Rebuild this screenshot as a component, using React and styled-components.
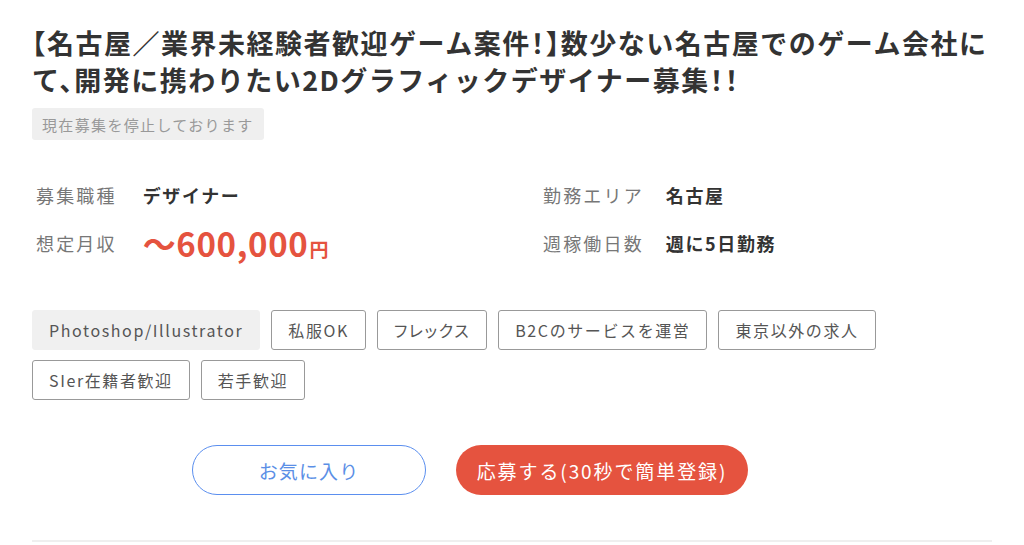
import React from "react";
import styled, { createGlobalStyle } from "styled-components";

const Global = createGlobalStyle`
  html, body { margin: 0; padding: 0; background: #fff; }
  body {
    font-family: "Noto Sans CJK JP", "Noto Sans", sans-serif;
    color: #333;
    -webkit-font-smoothing: antialiased;
  }
  * { box-sizing: border-box; }
`;

const Page = styled.div`
  width: 960px;
  margin: 0 32px;
  padding-top: 24px;
`;

const Title = styled.h1`
  margin: 0;
  font-size: 27px;
  line-height: 37px;
  font-weight: 700;
  letter-spacing: 1.5px;
  color: #333;
  font-feature-settings: "halt" 1;
`;

const Status = styled.div`
  display: inline-flex;
  align-items: center;
  height: 32px;
  margin-top: 10px;
  padding: 0 10px;
  background: #efefef;
  border-radius: 3px;
  color: #999;
  font-size: 15px;
  letter-spacing: 0.09em;
`;

const InfoGrid = styled.div`
  display: grid;
  grid-template-columns: 507px 1fr;
  row-gap: 18px;
  margin-top: 40px;
  padding-left: 4px;
`;

const InfoItem = styled.div`
  display: flex;
  align-items: center;
  height: 30px;
`;

const Label = styled.span`
  font-size: 18px;
  letter-spacing: 0.12em;
  color: #777;
  margin-right: ${(p) => p.$gap || 26}px;
`;

const Value = styled.span`
  font-size: 18px;
  font-weight: 700;
  letter-spacing: 0.09em;
  color: #333;
`;

const Salary = styled.span`
  display: inline-flex;
  align-items: baseline;
  color: #e5533f;
  font-weight: 700;
  font-size: 33px;
  letter-spacing: 0.02em;
  line-height: 1;
`;

const Yen = styled.span`
  font-size: 19px;
  margin-left: 1px;
`;

const Tags = styled.div`
  display: flex;
  flex-wrap: wrap;
  gap: 10px 11px;
  margin-top: 52px;
`;

const Tag = styled.span`
  display: inline-flex;
  align-items: center;
  height: 40px;
  padding: 0 16px;
  font-size: 16px;
  letter-spacing: 0.1em;
  color: #555;
  border-radius: 3px;
  border: 1px solid ${(p) => (p.$filled ? "#f0f0f0" : "#999")};
  background: ${(p) => (p.$filled ? "#f0f0f0" : "#fff")};
  font-feature-settings: ${(p) => (p.$prop ? '"palt" 1' : "normal")};
`;

const Actions = styled.div`
  display: flex;
  gap: 30px;
  margin-top: 45px;
  padding-left: 160px;
`;

const PillButton = styled.button`
  height: 50px;
  border-radius: 25px;
  font-family: inherit;
  font-size: 19px;
  cursor: pointer;
  display: inline-flex;
  align-items: center;
  justify-content: center;
  padding: 0;
`;

const FavButton = styled(PillButton)`
  width: 234px;
  background: #fff;
  border: 1.5px solid #5b8fef;
  color: #5b8fe6;
  letter-spacing: 0.06em;
`;

const ApplyButton = styled(PillButton)`
  width: 292px;
  background: #e5533f;
  border: none;
  color: #fff;
  letter-spacing: 0.1em;
`;

const Divider = styled.hr`
  margin: 45px 0 0;
  border: none;
  border-top: 2px solid #efefef;
`;

const tags = [
  { t: "Photoshop/Illustrator", filled: true },
  { t: "私服OK" },
  { t: "フレックス", prop: true },
  { t: "B2Cのサービスを運営" },
  { t: "東京以外の求人" },
  { t: "SIer在籍者歓迎" },
  { t: "若手歓迎" },
];

export default function App() {
  return (
    <>
      <Global />
      <Page>
        <Title>
          【名古屋／業界未経験者歓迎ゲーム案件！】数少ない名古屋でのゲーム会社にて、開発に携わりたい2Dグラフィックデザイナー募集！！
        </Title>
        <Status>現在募集を停止しております</Status>
        <InfoGrid>
          <InfoItem>
            <Label>募集職種</Label>
            <Value>デザイナー</Value>
          </InfoItem>
          <InfoItem>
            <Label $gap={22}>勤務エリア</Label>
            <Value>名古屋</Value>
          </InfoItem>
          <InfoItem>
            <Label>想定月収</Label>
            <Salary>
              〜600,000<Yen>円</Yen>
            </Salary>
          </InfoItem>
          <InfoItem>
            <Label $gap={22}>週稼働日数</Label>
            <Value>週に5日勤務</Value>
          </InfoItem>
        </InfoGrid>
        <Tags>
          {tags.map((x) => (
            <Tag key={x.t} $filled={x.filled} $prop={x.prop}>
              {x.t}
            </Tag>
          ))}
        </Tags>
        <Actions>
          <FavButton>お気に入り</FavButton>
          <ApplyButton>応募する(30秒で簡単登録)</ApplyButton>
        </Actions>
        <Divider />
      </Page>
    </>
  );
}
